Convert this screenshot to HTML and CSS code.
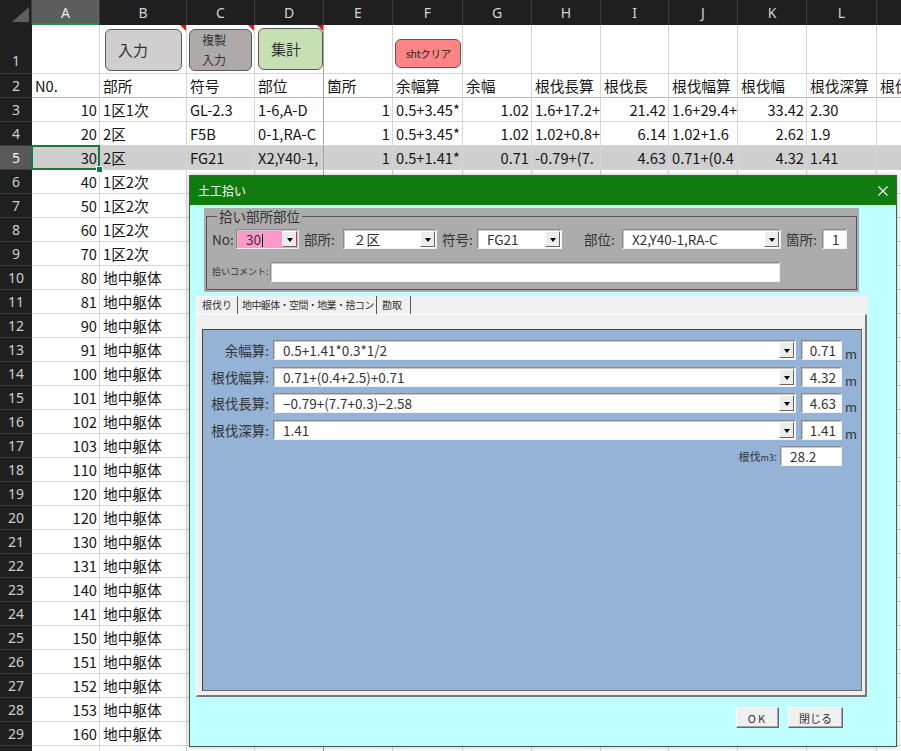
FILE: index.html
```html
<!DOCTYPE html>
<html lang="ja">
<head>
<meta charset="utf-8">
<title>土工拾い</title>
<link rel="stylesheet" href="styles.css">
</head>
<body>
<div class="sheet">
  <div class="row hdr"><span class="corner"><svg width="32" height="25" viewBox="0 0 32 25"><polygon points="12,22 29,22 29,7" fill="#5e5e5e"/></svg></span><span class="selc">A</span><span>B</span><span>C</span><span>D</span><span>E</span><span>F</span><span>G</span><span>H</span><span>I</span><span>J</span><span>K</span><span>L</span><span>M</span></div>
  <div class="row r1"><span class="rh">1</span><span></span><span class="bc"><div class="shape s-in">入力</div><i class="cmt"></i></span><span class="bc"><div class="shape s-cp"><span>複製</span><span>入力</span></div><i class="cmt"></i></span><span class="bc"><div class="shape s-sum">集計</div><i class="cmt"></i></span><span></span><span class="bc"><div class="shape s-clr">shtクリア</div></span><span></span><span></span><span></span><span></span><span></span><span></span><span></span></div>
  <div class="row r2"><span class="rh">2</span><span>N0.</span><span>部所</span><span>符号</span><span>部位</span><span>箇所</span><span>余幅算</span><span>余幅</span><span>根伐長算</span><span>根伐長</span><span>根伐幅算</span><span>根伐幅</span><span>根伐深算</span><span>根伐</span></div>
  <div class="row"><span class="rh">3</span><span class="n">10</span><span>1区1次</span><span>GL-2.3</span><span>1-6,A-D</span><span class="n">1</span><span>0.5+3.45*</span><span class="n">1.02</span><span>1.6+17.2+</span><span class="n">21.42</span><span>1.6+29.4+</span><span class="n">33.42</span><span>2.30</span><span></span></div>
  <div class="row"><span class="rh">4</span><span class="n">20</span><span>2区</span><span>F5B</span><span>0-1,RA-C</span><span class="n">1</span><span>0.5+3.45*</span><span class="n">1.02</span><span>1.02+0.8+</span><span class="n">6.14</span><span>1.02+1.6</span><span class="n">2.62</span><span>1.9</span><span></span></div>
  <div class="row sel"><span class="rh">5</span><span class="n act">30<i class="handle"></i></span><span>2区</span><span>FG21</span><span>X2,Y40-1,</span><span class="n">1</span><span>0.5+1.41*</span><span class="n">0.71</span><span>-0.79+(7.</span><span class="n">4.63</span><span>0.71+(0.4</span><span class="n">4.32</span><span>1.41</span><span></span></div>
  <div class="row"><span class="rh">6</span><span class="n">40</span><span>1区2次</span><span></span><span></span><span></span><span></span><span></span><span></span><span></span><span></span><span></span><span></span><span></span></div>
  <div class="row"><span class="rh">7</span><span class="n">50</span><span>1区2次</span><span></span><span></span><span></span><span></span><span></span><span></span><span></span><span></span><span></span><span></span><span></span></div>
  <div class="row"><span class="rh">8</span><span class="n">60</span><span>1区2次</span><span></span><span></span><span></span><span></span><span></span><span></span><span></span><span></span><span></span><span></span><span></span></div>
  <div class="row"><span class="rh">9</span><span class="n">70</span><span>1区2次</span><span></span><span></span><span></span><span></span><span></span><span></span><span></span><span></span><span></span><span></span><span></span></div>
  <div class="row"><span class="rh">10</span><span class="n">80</span><span>地中躯体</span><span></span><span></span><span></span><span></span><span></span><span></span><span></span><span></span><span></span><span></span><span></span></div>
  <div class="row"><span class="rh">11</span><span class="n">81</span><span>地中躯体</span><span></span><span></span><span></span><span></span><span></span><span></span><span></span><span></span><span></span><span></span><span></span></div>
  <div class="row"><span class="rh">12</span><span class="n">90</span><span>地中躯体</span><span></span><span></span><span></span><span></span><span></span><span></span><span></span><span></span><span></span><span></span><span></span></div>
  <div class="row"><span class="rh">13</span><span class="n">91</span><span>地中躯体</span><span></span><span></span><span></span><span></span><span></span><span></span><span></span><span></span><span></span><span></span><span></span></div>
  <div class="row"><span class="rh">14</span><span class="n">100</span><span>地中躯体</span><span></span><span></span><span></span><span></span><span></span><span></span><span></span><span></span><span></span><span></span><span></span></div>
  <div class="row"><span class="rh">15</span><span class="n">101</span><span>地中躯体</span><span></span><span></span><span></span><span></span><span></span><span></span><span></span><span></span><span></span><span></span><span></span></div>
  <div class="row"><span class="rh">16</span><span class="n">102</span><span>地中躯体</span><span></span><span></span><span></span><span></span><span></span><span></span><span></span><span></span><span></span><span></span><span></span></div>
  <div class="row"><span class="rh">17</span><span class="n">103</span><span>地中躯体</span><span></span><span></span><span></span><span></span><span></span><span></span><span></span><span></span><span></span><span></span><span></span></div>
  <div class="row"><span class="rh">18</span><span class="n">110</span><span>地中躯体</span><span></span><span></span><span></span><span></span><span></span><span></span><span></span><span></span><span></span><span></span><span></span></div>
  <div class="row"><span class="rh">19</span><span class="n">120</span><span>地中躯体</span><span></span><span></span><span></span><span></span><span></span><span></span><span></span><span></span><span></span><span></span><span></span></div>
  <div class="row"><span class="rh">20</span><span class="n">120</span><span>地中躯体</span><span></span><span></span><span></span><span></span><span></span><span></span><span></span><span></span><span></span><span></span><span></span></div>
  <div class="row"><span class="rh">21</span><span class="n">130</span><span>地中躯体</span><span></span><span></span><span></span><span></span><span></span><span></span><span></span><span></span><span></span><span></span><span></span></div>
  <div class="row"><span class="rh">22</span><span class="n">131</span><span>地中躯体</span><span></span><span></span><span></span><span></span><span></span><span></span><span></span><span></span><span></span><span></span><span></span></div>
  <div class="row"><span class="rh">23</span><span class="n">140</span><span>地中躯体</span><span></span><span></span><span></span><span></span><span></span><span></span><span></span><span></span><span></span><span></span><span></span></div>
  <div class="row"><span class="rh">24</span><span class="n">141</span><span>地中躯体</span><span></span><span></span><span></span><span></span><span></span><span></span><span></span><span></span><span></span><span></span><span></span></div>
  <div class="row"><span class="rh">25</span><span class="n">150</span><span>地中躯体</span><span></span><span></span><span></span><span></span><span></span><span></span><span></span><span></span><span></span><span></span><span></span></div>
  <div class="row"><span class="rh">26</span><span class="n">151</span><span>地中躯体</span><span></span><span></span><span></span><span></span><span></span><span></span><span></span><span></span><span></span><span></span><span></span></div>
  <div class="row"><span class="rh">27</span><span class="n">152</span><span>地中躯体</span><span></span><span></span><span></span><span></span><span></span><span></span><span></span><span></span><span></span><span></span><span></span></div>
  <div class="row"><span class="rh">28</span><span class="n">153</span><span>地中躯体</span><span></span><span></span><span></span><span></span><span></span><span></span><span></span><span></span><span></span><span></span><span></span></div>
  <div class="row"><span class="rh">29</span><span class="n">160</span><span>地中躯体</span><span></span><span></span><span></span><span></span><span></span><span></span><span></span><span></span><span></span><span></span><span></span></div>
  <div class="row"><span class="rh">30</span><span class="n">161</span><span>地中躯体</span><span></span><span></span><span></span><span></span><span></span><span></span><span></span><span></span><span></span><span></span><span></span></div>
</div>

<div class="dlg">
  <div class="ttl"><span>土工拾い</span><svg class="x" width="10" height="10" viewBox="0 0 10 10"><path d="M0.5 0.5L9.5 9.5M9.5 0.5L0.5 9.5" stroke="#fff" stroke-width="1.1"/></svg></div>
  <div class="dbody">
    <div class="grp">
      <fieldset class="frm">
        <legend>拾い部所部位</legend>
        <div class="frow">
          <span class="lbl l-no">No:</span>
          <div class="cb pink w-no"><span class="v">30<i class="caret"></i></span><span class="dd"></span></div>
          <span class="lbl l-bs">部所:</span>
          <div class="cb w-bs"><span class="v">２区</span><span class="dd"></span></div>
          <span class="lbl l-fg">符号:</span>
          <div class="cb w-fg"><span class="v">FG21</span><span class="dd"></span></div>
          <span class="lbl l-bi">部位:</span>
          <div class="cb w-bi"><span class="v">X2,Y40-1,RA-C</span><span class="dd"></span></div>
          <span class="lbl l-ks">箇所:</span>
          <div class="tb w-ks">1</div>
        </div>
        <div class="frow2">
          <span class="lbl l-cm">拾いコメント:</span>
          <div class="tb w-cm"></div>
        </div>
      </fieldset>
    </div>

    <div class="mp">
      <div class="tabs">
        <span class="tab on t1">根伐り</span><span class="tab t2">地中躯体・空間・地業・捨コン</span><span class="tab t3">勘取</span>
      </div>
      <div class="page">
        <div class="blue">
          <div class="frm-row"><span class="bl">余幅算:</span><div class="cb wide"><span class="v">0.5+1.41*0.3*1/2</span><span class="dd"></span></div><div class="tb val">0.71</div><span class="unit">m</span></div>
          <div class="frm-row"><span class="bl">根伐幅算:</span><div class="cb wide"><span class="v">0.71+(0.4+2.5)+0.71</span><span class="dd"></span></div><div class="tb val">4.32</div><span class="unit">m</span></div>
          <div class="frm-row"><span class="bl">根伐長算:</span><div class="cb wide"><span class="v">−0.79+(7.7+0.3)−2.58</span><span class="dd"></span></div><div class="tb val">4.63</div><span class="unit">m</span></div>
          <div class="frm-row"><span class="bl">根伐深算:</span><div class="cb wide"><span class="v">1.41</span><span class="dd"></span></div><div class="tb val">1.41</div><span class="unit">m</span></div>
          <div class="frm-row vol"><span class="vl">根伐<small>m3</small>:</span><div class="tb volbox">28.2</div></div>
        </div>
      </div>
    </div>

    <div class="btns"><button class="pb ok">OK</button><button class="pb cls">閉じる</button></div>
  </div>
</div>
</body>
</html>
```

FILE: styles.css
```css
* { box-sizing: border-box; }
html, body { margin: 0; padding: 0; }
body {
  width: 901px;
  height: 751px;
  overflow: hidden;
  position: relative;
  background: #fff;
  font-family: "Noto Sans CJK JP", "Noto Sans", sans-serif;
}

/* ---------- spreadsheet ---------- */
.sheet { width: 946px; }
.row {
  display: grid;
  grid-template-columns: 32px 68px 87px 68px 69px 69px 70px 69px 69px 68px 69px 69px 70px 69px;
  height: 24px;
}
.row > span {
  border-right: 1px solid #d6d6d6;
  border-bottom: 1px solid #d6d6d6;
  font-size: 14.67px;
  line-height: 23px;
  padding: 0 2px 0 3px;
  white-space: nowrap;
  overflow: hidden;
  color: #151515;
}
.row > span:nth-child(5) { border-right-color: #a3a3a3; }
.row > span.n { text-align: right; }
.row > span.rh {
  background: #1f1f1f;
  color: #cfcfcf;
  text-align: center;
  border-right: none;
  border-bottom: 1px solid #3a3a3a;
  font-family: "Noto Sans", sans-serif;
  font-size: 14px;
  padding: 0;
}
.hdr { height: 25px; }
.hdr > span {
  background: #1f1f1f;
  color: #d2d2d2;
  text-align: center;
  border-right: 1px solid #3c3c3c;
  border-bottom: none;
  font-family: "Noto Sans", sans-serif;
  font-size: 14px;
  line-height: 25px;
  padding: 0;
}
.hdr > span:nth-child(5) { border-right-color: #3c3c3c; }
.hdr > .corner { padding: 0; line-height: 0; }
.hdr > .selc {
  background: #5d5d5d;
  color: #f0f0f0;
  box-shadow: inset 0 -2px #1d8f4e;
}
.r1 { height: 49px; }
.r1 > span.rh { line-height: 24px; padding-top: 24px; }
.r2 > span { border-bottom-color: #b9b9b9; }

.sel > span { background: #cfcfcf; }
.sel > span.rh { background: #595959; color: #f2f2f2; }
.act { position: relative; overflow: visible !important; }
.act::after {
  content: "";
  position: absolute;
  left: -1px; top: -1px; right: -1px; bottom: -1px;
  border: 2px solid #107c41;
}
.handle {
  position: absolute;
  right: -4px; bottom: -4px;
  width: 7px; height: 7px;
  background: #107c41;
  border: 1px solid #fff;
  z-index: 2;
}

/* buttons drawn as shapes in row 1 */
.bc { position: relative; padding: 0 !important; }
.cmt {
  position: absolute;
  top: 0; right: 0;
  width: 0; height: 0;
  border-top: 6px solid #e81123;
  border-left: 6px solid transparent;
}
.shape {
  border: 1px solid #5a5a5a;
  border-radius: 6px;
  color: #333;
  display: flex;
  align-items: center;
}
.s-in {
  margin: 4px 0 0 5px;
  width: 77px; height: 42px;
  background: #d0cece;
  font-size: 15px;
  padding: 0 0 1px 12px;
}
.s-cp {
  margin: 4px 0 0 2px;
  width: 63px; height: 42px;
  background: #aeaaaa;
  font-size: 12px;
  line-height: 20px;
  flex-direction: column;
  align-items: flex-start;
  justify-content: center;
  padding-left: 12px;
}
.s-sum {
  margin: 3px 0 0 3px;
  width: 65px; height: 42px;
  background: #c6e0b4;
  font-size: 15px;
  padding: 0 0 2px 12px;
}
.s-clr {
  margin: 14px 0 0 2px;
  width: 66px; height: 29px;
  background: #ff8585;
  font-size: 10.5px;
  letter-spacing: -0.3px;
  padding-left: 10px;
  color: #222;
}

/* ---------- dialog ---------- */
.dlg {
  position: absolute;
  left: 189px; top: 175px;
  width: 708px; height: 572px;
  background: #c0ffff;
  border: 1px solid #3f5f4c;
  box-shadow: 0 0 5px rgba(0,0,0,.25);
  font-family: "Noto Sans CJK JP", sans-serif;
  font-size: 13.5px;
  color: #333;
}
.ttl {
  height: 29px;
  background: #107c10;
  color: #fff;
  display: flex;
  align-items: center;
  justify-content: space-between;
  padding: 0 8px 0 8px;
  font-size: 12px;
}
.dbody { display: flex; flex-direction: column; }

.grp {
  margin: 3px 0 0 14px;
  width: 655px;
  background: #acacac;
  padding: 0 2px 2px 2px;
}
.frm {
  margin: 0;
  padding: 0 0 7px 5px;
  border: 1px solid #555;
  min-width: 0;
}
.frm legend {
  margin-left: 5px;
  padding: 0 2px;
  font-size: 13.5px;
  line-height: 17px;
  color: #333;
}
.frow { display: flex; align-items: center; height: 20px; margin-top: 4px; }
.frow2 { display: flex; align-items: center; height: 21px; margin-top: 12px; }
.lbl { white-space: nowrap; color: #333; }
.l-no { width: 24px; }
.w-no { width: 63px; }
.l-bs { width: 39px; margin-left: 5px; }
.w-bs { width: 94px; }
.l-fg { width: 35px; margin-left: 5px; }
.w-fg { width: 85px; }
.l-bi { width: 38px; margin-left: 22px; }
.w-bi { width: 159px; }
.l-ks { width: 36px; margin-left: 5px; }
.w-ks { width: 25px; }
.l-cm { width: 58px; font-size: 9px; }
.w-cm { width: 510px; height: 21px; }

.cb {
  display: flex;
  align-items: center;
  height: 20px;
  background: #fff;
  border: 1px solid;
  border-color: #8a8a8a #f2f2f2 #f2f2f2 #8a8a8a;
  box-shadow: inset 1px 1px #c8c8c8;
  padding: 0 1px 0 9px;
}
.cb .v { flex: 1; white-space: nowrap; overflow: hidden; color: #333; line-height: 18px; }
.cb.pink { background: #ff99cc; }
.caret {
  display: inline-block;
  width: 1px; height: 13px;
  background: #000;
  vertical-align: -2px;
  margin-left: 1px;
}
.dd {
  width: 15px; height: 16px;
  flex: none;
  background: #ececec;
  border: 1px solid;
  border-color: #fff #666 #666 #fff;
  display: flex;
  align-items: center;
  justify-content: center;
  padding-top: 2px;
}
.dd::before {
  content: "";
  border-left: 3.5px solid transparent;
  border-right: 3.5px solid transparent;
  border-top: 4px solid #000;
}
.tb {
  height: 20px;
  background: #fff;
  border: 1px solid;
  border-color: #8a8a8a #f2f2f2 #f2f2f2 #8a8a8a;
  box-shadow: inset 1px 1px #c8c8c8;
  padding-left: 9px;
  line-height: 18px;
  color: #333;
}

/* multipage */
.mp {
  margin: 4px 0 0 6px;
  width: 672px;
  height: 401px;
  background: #f0f0f0;
  display: flex;
  flex-direction: column;
}
.tabs { display: flex; height: 18px; padding-left: 1px; }
.tab {
  font-size: 10px;
  line-height: 17px;
  padding-left: 5px;
  white-space: nowrap;
  overflow: hidden;
  border-right: 1px solid #555;
  color: #333;
}
.tab.on { border-top: 1px solid #fff; border-left: 1px solid #fff; line-height: 16px; padding-left: 4px; }
.t1 { width: 41px; }
.t2 { width: 139px; letter-spacing: -0.6px; padding-left: 4px; }
.t3 { width: 34px; }
.page {
  flex: 1;
  margin-right: 1px;
  border-top: 1px solid #fff;
  border-left: 1px solid #fff;
  border-right: 2px solid #777;
  border-bottom: 2px solid #777;
  padding: 14px 3px 3px 5px;
}
.blue {
  height: 362px;
  background: #95b3d7;
  border: 1px solid;
  border-color: #444 #6a6a6a #6a6a6a #444;
  padding-top: 10px;
  display: flex;
  flex-direction: column;
  gap: 6.5px;
}
.frm-row { display: flex; height: 20px; align-items: center; }
.bl { width: 68px; text-align: right; padding-right: 2px; white-space: nowrap; }
.cb.wide { width: 523px; margin-left: 2px; }
.tb.val { width: 41px; margin-left: 5px; text-align: right; padding: 0 5px 0 0; }
.unit { align-self: flex-end; margin-left: 3px; font-size: 13px; line-height: 13px; color: #333; }
.frm-row.vol { justify-content: flex-end; padding-right: 19px; }
.vl { font-size: 11px; white-space: nowrap; margin-right: 3px; }
.vl small { font-size: 9px; }
.tb.volbox { width: 62px; }

.btns {
  display: flex;
  justify-content: flex-end;
  gap: 9px;
  margin-top: 10px;
  padding-right: 53px;
}
.pb {
  height: 21px;
  background: #f0f0f0;
  border: 1px solid;
  border-color: #fff #666 #666 #fff;
  box-shadow: inset -1px -1px #a8a8a8;
  font-family: "Noto Sans CJK JP", sans-serif;
  font-size: 11px;
  color: #333;
  padding: 0;
}
.ok { width: 43px; letter-spacing: 2px; }
.cls { width: 55px; }
```
